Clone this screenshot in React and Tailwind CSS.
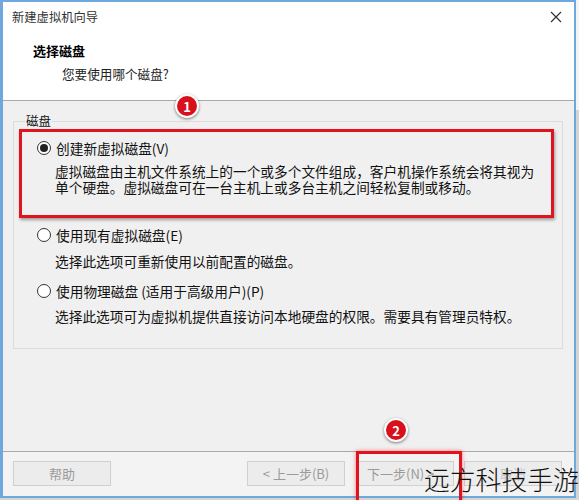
import React from 'react';

const font = { fontFamily: '"Noto Sans CJK SC", "Noto Sans", sans-serif' };

function Radio({ checked }) {
  return (
    <span className="w-[14px] h-[14px] rounded-full border border-[#333] bg-white flex items-center justify-center shrink-0">
      {checked && <span className="w-[8px] h-[8px] rounded-full bg-[#222]" />}
    </span>
  );
}

function Badge({ n, className }) {
  return (
    <div className={`absolute w-[24px] h-[24px] rounded-full bg-white shadow-[0_1px_3px_rgba(0,0,0,0.5)] flex items-center justify-center ${className}`}>
      <div className="w-[20px] h-[20px] rounded-full bg-[#d8101c] text-white text-[13px] font-bold flex items-center justify-center leading-none">
        {n}
      </div>
    </div>
  );
}

function Option({ checked, label, desc, gap = 'mt-[4px]' }) {
  return (
    <div className="flex flex-col">
      <div className="flex items-center gap-[5px] h-[20px]">
        <Radio checked={checked} />
        <span className="text-[13.7px] text-[#111]">{label}</span>
      </div>
      <div className={`pl-[18px] ${gap} text-[13.7px] leading-[16px] text-[#111]`}>{desc}</div>
    </div>
  );
}

function Btn({ children, className = '' }) {
  return (
    <div className={`h-[25px] border border-[#d0d0d0] bg-[#ececec] text-[#9a9a9a] text-[13px] flex items-center justify-center ${className}`}>
      {children}
    </div>
  );
}

export default function App() {
  return (
    <div className="w-[579px] h-[500px] bg-[#d4d4d4] relative overflow-hidden" style={font}>
      <div className="absolute right-0 top-0 w-[4px] h-[110px] bg-[#f4f4f4]" />
      <div className="absolute left-0 top-0 w-[576px] h-[498px] border-l-[3px] border-r-[2px] border-t-[2px] border-b-[2px] border-[#6ea8de] bg-[#f0f0f0] flex flex-col">
        {/* title bar */}
        <div className="h-[30px] bg-white flex items-center justify-between pl-[9px] pr-[10px]">
          <span className="text-[12.3px] text-[#333]">新建虚拟机向导</span>
          <svg width="12" height="12" viewBox="0 0 12 12" className="mr-[2px]">
            <path d="M1 1 L11 11 M11 1 L1 11" stroke="#333" strokeWidth="1.2" />
          </svg>
        </div>

        {/* header */}
        <div className="h-[69px] bg-white border-b border-[#a9a9a9] pl-[30px] pt-[9px]">
          <div className="text-[13px] font-bold text-black leading-[20px]">选择磁盘</div>
          <div className="pl-[29px] text-[12.6px] text-[#222] leading-[20px] mt-[3px]">您要使用哪个磁盘?</div>
        </div>

        {/* body */}
        <div className="flex-1 px-[10px] pt-[20px]">
          <div className="relative h-[228px] w-[550px] border border-[#dcdcdc] pt-[7px] px-[5px]">
            <span className="absolute left-[11px] top-[-9px] bg-[#f0f0f0] px-[1px] text-[12.5px] leading-[16px] text-[#111]">磁盘</span>
            <div className="w-[535px] h-[89px] border-[3px] border-[#e0141e] shadow-[1px_2px_3px_rgba(0,0,0,0.35)] pl-[15px] pt-[6px]">
              <Option
                checked
                gap="mt-[5px]"
                label="创建新虚拟磁盘(V)"
                desc={<>虚拟磁盘由主机文件系统上的一个或多个文件组成，客户机操作系统会将其视为<br />单个硬盘。虚拟磁盘可在一台主机上或多台主机之间轻松复制或移动。</>}
              />
            </div>
            <div className="pl-[18px] mt-[7px] flex flex-col gap-[12px]">
              <Option gap="mt-[8px]" label="使用现有虚拟磁盘(E)" desc="选择此选项可重新使用以前配置的磁盘。" />
              <Option gap="mt-[7px]" label="使用物理磁盘 (适用于高级用户)(P)" desc="选择此选项可为虚拟机提供直接访问本地硬盘的权限。需要具有管理员特权。" />
            </div>
          </div>
        </div>

        {/* footer */}
        <div className="h-[45px] border-t border-[#a9a9a9] bg-[#f3f3f3] flex items-center px-[10px] pb-[1px]">
          <Btn className="w-[98px]">帮助</Btn>
          <Btn className="w-[98px] ml-[136px]">&lt; 上一步(B)</Btn>
          <Btn className="w-[97px] ml-[12px] border-[#7db3e8] justify-start pl-[9px]">下一步(N) &gt;</Btn>
          <Btn className="w-[98px] ml-[10px] text-[#c8c8c8]">取消</Btn>
        </div>
      </div>

      <Badge n="1" className="left-[175px] top-[94px]" />
      <Badge n="2" className="left-[384px] top-[418px]" />

      <div className="absolute left-[356px] top-[451px] w-[106px] h-[52px] border-[3px] border-[#e0141e] shadow-[0_0_4px_rgba(255,0,0,0.5)]" />

      <div className="absolute left-[424px] top-[462px] text-[25.8px] leading-[34px] text-[#111] whitespace-nowrap font-light">远方科技手游</div>
    </div>
  );
}
